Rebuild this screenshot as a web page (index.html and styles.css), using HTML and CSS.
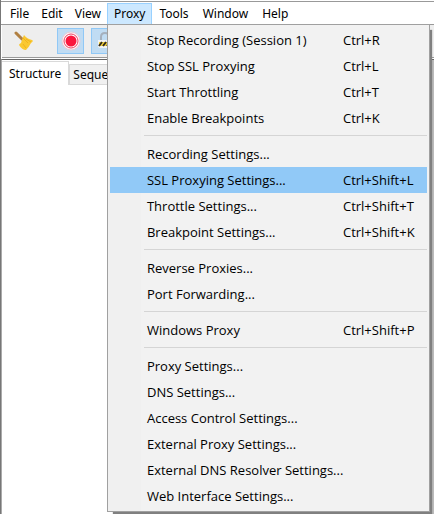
FILE: index.html
```html
<!DOCTYPE html>
<html lang="en">
<head>
<meta charset="utf-8">
<title>Proxy</title>
<link rel="stylesheet" href="styles.css">
</head>
<body>
<div class="window">
  <nav class="menubar">
    <button>File</button>
    <button>Edit</button>
    <button>View</button>
    <div class="menu-anchor">
      <button class="open">Proxy</button>
      <div class="menu" role="menu">
        <button role="menuitem">Stop Recording (Session 1)<kbd>Ctrl+R</kbd></button>
        <button role="menuitem">Stop SSL Proxying<kbd>Ctrl+L</kbd></button>
        <button role="menuitem">Start Throttling<kbd>Ctrl+T</kbd></button>
        <button role="menuitem">Enable Breakpoints<kbd>Ctrl+K</kbd></button>
        <hr>
        <button role="menuitem">Recording Settings...</button>
        <button role="menuitem" class="selected">SSL Proxying Settings...<kbd>Ctrl+Shift+L</kbd></button>
        <button role="menuitem">Throttle Settings...<kbd>Ctrl+Shift+T</kbd></button>
        <button role="menuitem">Breakpoint Settings...<kbd>Ctrl+Shift+K</kbd></button>
        <hr>
        <button role="menuitem">Reverse Proxies...</button>
        <button role="menuitem">Port Forwarding...</button>
        <hr>
        <button role="menuitem">Windows Proxy<kbd>Ctrl+Shift+P</kbd></button>
        <hr>
        <button role="menuitem">Proxy Settings...</button>
        <button role="menuitem">DNS Settings...</button>
        <button role="menuitem">Access Control Settings...</button>
        <button role="menuitem">External Proxy Settings...</button>
        <button role="menuitem">External DNS Resolver Settings...</button>
        <button role="menuitem">Web Interface Settings...</button>
      </div>
    </div>
    <button>Tools</button>
    <button>Window</button>
    <button>Help</button>
  </nav>
  <div class="toolbar">
    <button aria-label="Clear">
      <svg width="20" height="20" viewBox="0 0 20 20">
        <path d="M2 2 8 8" stroke="#b18042" stroke-width="3" stroke-linecap="round"/>
        <path d="M10 4Q13 8 18 9Q20 10 17 12Q15 16 12 19Q8 19 5 14Q5 13 7 12Q8 8 10 4Z" fill="#fac832"/>
        <path d="M9 7 14 12M12 8 17 11M9 13 12 17" stroke="#f0b41f" fill="none"/>
      </svg>
    </button>
    <button class="on" aria-label="Record">
      <svg width="20" height="20" viewBox="0 0 20 20">
        <circle cx="10" cy="10" r="9" fill="#fff3f6" stroke="#e9cbd6"/>
        <circle cx="10" cy="10" r="7" fill="#fff" stroke="#f04464"/>
        <circle cx="10" cy="10" r="5.5" fill="#fa173d"/>
      </svg>
    </button>
    <button class="on" aria-label="SSL proxying">
      <svg width="20" height="20" viewBox="0 0 20 20">
        <path d="M6 10V6Q6 2 10 2T14 6V10" fill="none" stroke="#a5b0bd" stroke-width="2"/>
        <path d="M3 9H19V15Q19 17 17 17H5Q3 17 3 15Z" fill="#f3f3f3"/>
        <path d="M4 11H18V15H4Z" fill="#f8d43d"/>
        <path d="M4 15 7 11M8 15 11 11M12 15 15 11M16 15 18 12" stroke="#332d1c" stroke-width="2"/>
      </svg>
    </button>
  </div>
  <main class="panes">
    <section class="pane">
      <div class="tabs" role="tablist">
        <button role="tab" aria-selected="true">Structure</button>
        <button role="tab" aria-selected="false">Sequence</button>
      </div>
      <div class="tree"></div>
    </section>
    <section class="detail"></section>
  </main>
</div>
</body>
</html>
```
FILE: styles.css
```css
* { box-sizing: border-box; }
body {
  margin: 0;
  background: #fff;
  color: #000;
  font: 12px/18px "Noto Sans", "Open Sans", sans-serif;
  overflow: hidden;
}
button {
  margin: 0;
  padding: 0;
  border: 0;
  background: transparent;
  color: inherit;
  font: inherit;
  white-space: nowrap;
}
.window {
  display: flex;
  flex-direction: column;
  height: 100vh;
  padding-top: 1px;
  border-left: 1px solid #777;
}
.menubar {
  display: flex;
  height: 24px;
  padding: 1px 0 0 3px;
  border-top: 1px solid #999;
  border-bottom: 1px solid #999;
}
.menubar > button, .open {
  height: 22px;
  padding: 0 5px;
  border: 1px solid transparent;
  line-height: 20px;
}
.menubar > .menu-anchor ~ button { padding: 0 6px; }
.menu-anchor { position: relative; }
.menubar .open {
  padding: 0 6px;
  background: #cce8ff;
  border-color: #99d1ff;
}
.menu {
  position: absolute;
  z-index: 1;
  top: 21px;
  left: 0;
  width: 323px;
  padding: 2px;
  background: linear-gradient(to right, #f0f0f0 33px, #f2f2f2 33px);
  border: 1px solid #a0a0a0;
  box-shadow: 4px 4px 1px -2px #808080;
  font: 13px/26px "Open Sans", "Noto Sans", sans-serif;
}
.menu button {
  display: flex;
  width: 100%;
  height: 26px;
  padding: 0 0 0 37px;
  text-align: left;
}
.menu kbd {
  width: 84px;
  margin-left: auto;
  font: inherit;
}
.menu .selected { background: #91c9f7; }
.menu hr {
  height: 1px;
  margin: 4px 0 5px 34px;
  border: 0;
  background: #d5d5d5;
}
.toolbar {
  display: flex;
  align-items: center;
  gap: 7px;
  height: 33px;
  padding-left: 8px;
  margin-left: 1px;
  background: #eee;
  border-bottom: 1px solid #999;
}
.toolbar button {
  display: grid;
  place-items: center;
  width: 27px;
  height: 26px;
  border: 1px solid transparent;
}
.toolbar button:first-child { margin-right: 13px; }
.toolbar .on {
  background: #c0dcf3;
  border-color: #90c8f6;
}
.panes {
  display: flex;
  flex: 1;
  margin-top: 1px;
  border-top: 1px solid #666;
  border-left: 1px solid #aaa;
  background: #bbb;
}
.pane {
  display: flex;
  flex-direction: column;
  width: 327px;
  background: #fff;
}
.tabs {
  display: flex;
  height: 25px;
  padding-top: 1px;
  background: #fff;
}
.tabs button {
  height: 21px;
  margin-top: 3px;
  padding: 0 3px;
  background: #f0f0f0;
  border: 1px solid #d9d9d9;
  line-height: 20px;
}
.tabs [aria-selected="true"] {
  height: 24px;
  margin-top: 0;
  padding: 0 7px;
  background: #fff;
  border-bottom: 0;
  border-left: 0;
}
.tree { flex: 1; }
.detail {
  flex: 1;
  border-left: 1px solid #555;
  background: #bbb;
}
```
